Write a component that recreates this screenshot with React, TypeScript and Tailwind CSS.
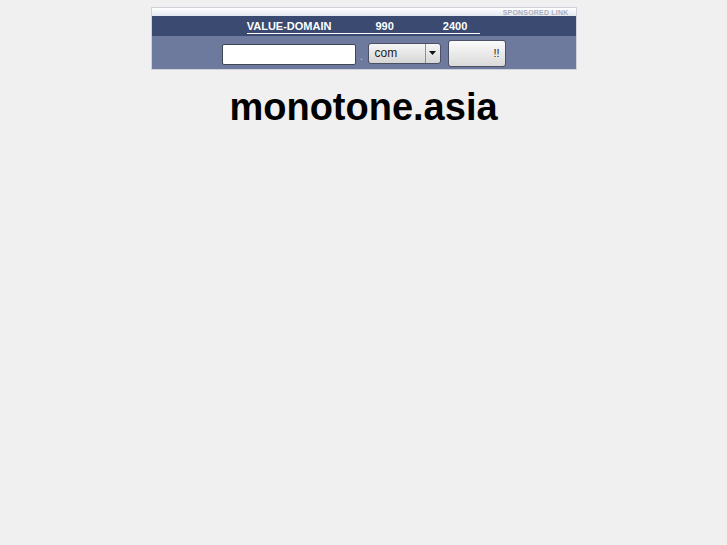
import React from "react";

export default function App() {
  return (
    <div className="min-h-[545px] w-full bg-[#f0f0f0] pt-[7px] flex flex-col items-center" style={{ fontFamily: '"Liberation Sans", Arial, sans-serif' }}>
      <div className="w-[426px] border border-[#cfd2d8] bg-[#6d7a9e]">
        {/* sponsored strip */}
        <div className="h-[8px] bg-gradient-to-b from-[#ffffff] to-[#e4e8f0] flex items-center justify-end pr-[7px]">
          <span className="text-[7px] leading-none font-bold text-[#a9afbd] tracking-[0.2px]">SPONSORED LINK</span>
        </div>
        {/* dark bar */}
        <div className="h-[20px] bg-[#3a4a70] flex justify-center items-start pt-[4px]">
          <a className="inline-flex items-end border-b border-white text-white text-[11px] font-bold leading-[12px] pb-[1px]">
            <span>VALUE-DOMAIN</span>
            <span className="w-[44px]"></span>
            <span>990</span>
            <span className="w-[49px]"></span>
            <span>2400</span>
            <span className="w-[13px]"></span>
          </a>
        </div>
        {/* form bar */}
        <div className="h-[33px] bg-[#6d7a9e] flex items-center justify-center">
          <div className="w-[134px] h-[21px] mt-[4px] bg-white border border-[#3f4656] rounded-[2px]"></div>
          <span className="w-[12px] text-center text-[#c9cedb] text-[10px] mt-[8px]">.</span>
          <div className="w-[73px] h-[21px] mt-[1px] flex border border-[#4b5162] rounded-[3px] bg-gradient-to-b from-[#f6f6f6] to-[#d6d6d6] overflow-hidden">
            <div className="flex-1 flex items-center pl-[6px] text-[12px] text-[#222]">com</div>
            <div className="w-[15px] border-l border-[#8a8f9a] flex items-center justify-center">
              <svg width="7" height="4" viewBox="0 0 7 4"><path d="M0 0 L7 0 L3.5 4 Z" fill="#111" /></svg>
            </div>
          </div>
          <div className="ml-[7px] w-[58px] h-[27px] mt-[1px] border border-[#4b5162] rounded-[3px] bg-gradient-to-b from-[#fbfbfb] to-[#dadada] flex items-center justify-end pr-[5px] text-[11px] text-[#222]">
            !!
          </div>
        </div>
      </div>
      <h1 className="mt-[18px] text-[38px] leading-none font-bold text-black">monotone.asia</h1>
    </div>
  );
}
